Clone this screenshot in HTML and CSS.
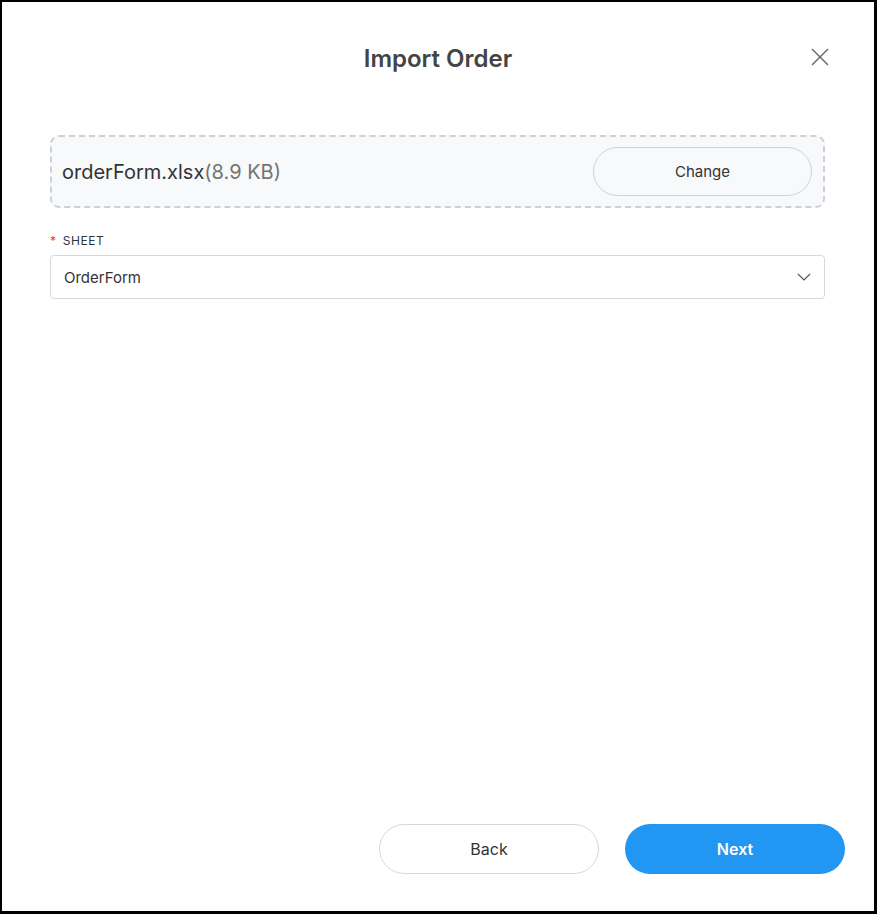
FILE: index.html
```html
<!DOCTYPE html>
<html lang="en">
<head>
    <meta charset="UTF-8">
    <meta name="viewport" content="width=device-width, initial-scale=1.0">
    <title>Import Order</title>
    <link rel="stylesheet" href="styles.css">
</head>
<body>

    <div class="modal">
        <header class="modal-header">
            <span></span>
            <h1>Import Order</h1>
            <button class="close-btn" aria-label="Close">
                <svg width="18" height="18" viewBox="0 0 18 18">
                    <path d="M1 1 L17 17 M17 1 L1 17" stroke="#6b6b6b" stroke-width="1.5" fill="none"/>
                </svg>
            </button>
        </header>

        <section class="modal-body">
            <div class="file-box">
                <p class="file-name">orderForm.xlsx<span class="file-size">(8.9 KB)</span></p>
                <button class="change-btn">Change</button>
            </div>

            <div class="field">
                <label class="field-label"><span class="required">*</span>SHEET</label>
                <div class="select">
                    <span>OrderForm</span>
                    <svg width="14" height="8" viewBox="0 0 14 8">
                        <path d="M1 1 L7 7 L13 1" stroke="#555" stroke-width="1.2" fill="none"/>
                    </svg>
                </div>
            </div>
        </section>

        <footer class="modal-footer">
            <button class="btn btn-back">Back</button>
            <button class="btn btn-next">Next</button>
        </footer>
    </div>

</body>
</html>
```

FILE: styles.css
```css
* {
    box-sizing: border-box;
}
body {
    font-family: 'Inter', 'Liberation Sans', sans-serif;
    background-color: white;
    color: #333;
    margin: 0;
    padding: 0;
}
.modal {
    height: 914px;
    border-style: solid;
    border-color: #000;
    border-width: 2px 3px 3px 2px;
    display: flex;
    flex-direction: column;
}
.modal-header {
    display: grid;
    grid-template-columns: 1fr auto 1fr;
    align-items: center;
    padding: 38px 0 0 0;
    height: 76px;
}
.modal-header h1 {
    margin: 0;
    font-size: 24px;
    font-weight: 600;
    line-height: 36px;
    color: #444;
}
.close-btn {
    justify-self: end;
    margin-right: 45px;
    margin-bottom: 4px;
    background: none;
    border: none;
    padding: 0;
    width: 18px;
    height: 18px;
    cursor: pointer;
    display: flex;
}
.modal-body {
    padding: 57px 49px 0 48px;
}
.file-box {
    display: flex;
    align-items: center;
    justify-content: space-between;
    height: 73px;
    padding: 0 11px 0 10px;
    background-color: #f7f9fb;
    border: 2px dashed #cdd1d7;
    border-radius: 9px;
}
.file-name {
    margin: 0;
    font-size: 20px;
    color: #333;
}
.file-size {
    color: #747474;
}
.change-btn {
    width: 219px;
    height: 49px;
    background-color: #f7f9fb;
    border: 1px solid #cfd3d9;
    border-radius: 25px;
    font-family: inherit;
    font-size: 15px;
    color: #333;
    cursor: pointer;
}
.field {
    margin-top: 25px;
}
.field-label {
    display: block;
    font-size: 12px;
    letter-spacing: 0.6px;
    color: #333;
    margin-bottom: 7px;
    line-height: 15px;
}
.required {
    color: #e53935;
    margin-right: 6px;
}
.select {
    display: flex;
    align-items: center;
    justify-content: space-between;
    height: 44px;
    padding: 0 13px 0 13px;
    border: 1px solid #d6d9de;
    border-radius: 4px;
    font-size: 15px;
    color: #333;
}
.modal-footer {
    margin-top: auto;
    display: flex;
    justify-content: flex-end;
    gap: 26px;
    padding: 0 29px 37px 0;
}
.btn {
    width: 220px;
    height: 50px;
    border-radius: 25px;
    font-family: inherit;
    font-size: 16px;
    cursor: pointer;
}
.btn-back {
    background-color: white;
    border: 1px solid #d5d8de;
    color: #333;
}
.btn-next {
    background-color: #2196f3;
    border: none;
    color: white;
    font-weight: 600;
}
```
